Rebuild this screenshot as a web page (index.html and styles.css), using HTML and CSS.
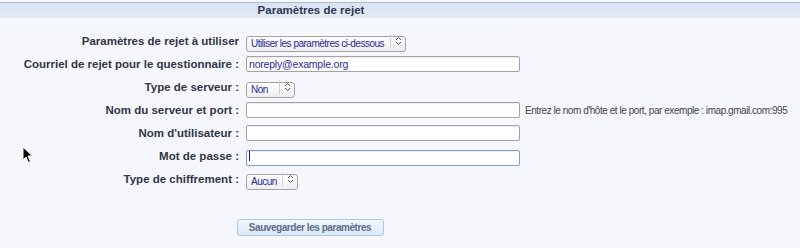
FILE: index.html
```html
<!DOCTYPE html>
<html lang="fr">
<head>
    <meta charset="UTF-8">
    <title>Paramètres de rejet</title>
    <link rel="stylesheet" href="styles.css">
</head>
<body>

    <div class="header-bar">
        <h2 class="header-title">Paramètres de rejet</h2>
    </div>

    <form class="bounce-form">
        <div class="form-grid">
            <label class="field-label" for="bounce_use">Paramètres de rejet à utiliser</label>
            <div class="select-wrap select-wide">
                <select id="bounce_use" class="field-select">
                    <option>Utiliser les paramètres ci-dessous</option>
                </select>
                <span class="select-arrow">
                    <svg width="7" height="10" viewBox="0 0 7 10"><path d="M1 4 L3.5 1.5 L6 4 M1 6 L3.5 8.5 L6 6" fill="none" stroke="#555" stroke-width="1"/></svg>
                </span>
            </div>
            <span></span>

            <label class="field-label" for="bounce_email">Courriel de rejet pour le questionnaire :</label>
            <input id="bounce_email" class="field-input" type="text" value="noreply@example.org">
            <span></span>

            <label class="field-label" for="bounce_type">Type de serveur :</label>
            <div class="select-wrap select-small">
                <select id="bounce_type" class="field-select">
                    <option>Non</option>
                </select>
                <span class="select-arrow">
                    <svg width="7" height="10" viewBox="0 0 7 10"><path d="M1 4 L3.5 1.5 L6 4 M1 6 L3.5 8.5 L6 6" fill="none" stroke="#555" stroke-width="1"/></svg>
                </span>
            </div>
            <span></span>

            <label class="field-label" for="bounce_host">Nom du serveur et port :</label>
            <input id="bounce_host" class="field-input" type="text">
            <span class="field-hint">Entrez le nom d'hôte et le port, par exemple : imap.gmail.com:995</span>

            <label class="field-label" for="bounce_user">Nom d'utilisateur :</label>
            <input id="bounce_user" class="field-input" type="text">
            <span></span>

            <label class="field-label" for="bounce_pass">Mot de passe :</label>
            <div class="input-wrap">
                <input id="bounce_pass" class="field-input is-focused" type="password">
                <span class="caret"></span>
            </div>
            <span></span>

            <label class="field-label" for="bounce_enc">Type de chiffrement :</label>
            <div class="select-wrap select-medium">
                <select id="bounce_enc" class="field-select">
                    <option>Aucun</option>
                </select>
                <span class="select-arrow">
                    <svg width="7" height="10" viewBox="0 0 7 10"><path d="M1 4 L3.5 1.5 L6 4 M1 6 L3.5 8.5 L6 6" fill="none" stroke="#555" stroke-width="1"/></svg>
                </span>
            </div>
            <span></span>
        </div>

        <div class="form-actions">
            <button type="button" class="save-btn">Sauvegarder les paramètres</button>
        </div>
    </form>

    <!-- pointeur de la souris -->
    <svg class="mouse-pointer" width="12" height="18" viewBox="0 0 12 18">
        <path d="M1 1 L1 14 L4 11 L6.5 16.5 L8.5 15.5 L6 10 L10.5 10 Z" fill="#000" stroke="#fff" stroke-width="1"/>
    </svg>

</body>
</html>
```

FILE: styles.css
```css
/* Reset */
* {
    margin: 0;
    padding: 0;
    box-sizing: border-box;
}

body {
    font-family: 'Liberation Sans', Arial, sans-serif;
    background: #f6f7fc;
    color: #2f3646;
    position: relative;
    height: 248px;
    overflow: hidden;
}

/* Barre de titre */
.header-bar {
    margin-top: 2px;
    height: 17px;
    border-top: 1px solid #a9bddb;
    border-bottom: 1px solid #eef2f9;
    background: linear-gradient(#d9e3f2, #e3eaf5);
}

.header-title {
    width: 622px;
    text-align: center;
    font-size: 11.5px;
    line-height: 15px;
    font-weight: bold;
    color: #2e3850;
}

/* Formulaire */
.bounce-form {
    padding-top: 14px;
}

.form-grid {
    display: grid;
    grid-template-columns: 239px 274px auto;
    grid-auto-rows: 16px;
    column-gap: 7px;
    row-gap: 7px;
    align-items: center;
}

.field-label {
    text-align: right;
    font-size: 11.5px;
    font-weight: bold;
    color: #2f3646;
    white-space: nowrap;
}

.field-input {
    width: 274px;
    height: 16px;
    border: 1px solid #a3a3a3;
    border-radius: 2px;
    background: #fff;
    box-shadow: inset 0 1px 1px rgba(0, 0, 0, 0.08);
    font-family: 'Liberation Sans', Arial, sans-serif;
    font-size: 10.5px;
    letter-spacing: -0.2px;
    color: #2a2a9c;
    padding: 0 2px;
    outline: none;
}

.field-input.is-focused {
    border-color: #7e9ccc;
}

.input-wrap {
    position: relative;
    height: 16px;
}

.caret {
    position: absolute;
    left: 3px;
    top: 3px;
    width: 1px;
    height: 10px;
    background: #1a1a6a;
}

.field-hint {
    margin-left: -2px;
    font-size: 10px;
    letter-spacing: -0.45px;
    color: #444;
    white-space: nowrap;
}

/* Listes déroulantes */
.select-wrap {
    position: relative;
    height: 16px;
}

.select-wide { width: 160px; }
.select-small { width: 49px; }
.select-medium { width: 52px; }

.field-select {
    appearance: none;
    -webkit-appearance: none;
    width: 100%;
    height: 16px;
    border: 1px solid #a5a5a5;
    border-radius: 3px;
    background: linear-gradient(#fdfdfd, #eeeeee);
    font-family: 'Liberation Sans', Arial, sans-serif;
    font-size: 10px;
    letter-spacing: -0.5px;
    color: #2a2a9c;
    padding: 0 0 0 4px;
    outline: none;
}

.select-arrow {
    position: absolute;
    top: 1px;
    right: 1px;
    width: 15px;
    height: 14px;
    border-left: 1px solid #d4d4d4;
    display: flex;
    align-items: center;
    justify-content: center;
}

/* Bouton */
.form-actions {
    width: 620px;
    padding-top: 30px;
    text-align: center;
}

.save-btn {
    width: 147px;
    height: 17px;
    border: 1px solid #a4c8ee;
    border-radius: 3px;
    background: linear-gradient(#f1f6fd, #dce9f8);
    font-family: 'Liberation Sans', Arial, sans-serif;
    font-size: 10px;
    font-weight: bold;
    letter-spacing: -0.45px;
    color: #5d6c8c;
}

.mouse-pointer {
    position: absolute;
    left: 22px;
    top: 146px;
}
```
